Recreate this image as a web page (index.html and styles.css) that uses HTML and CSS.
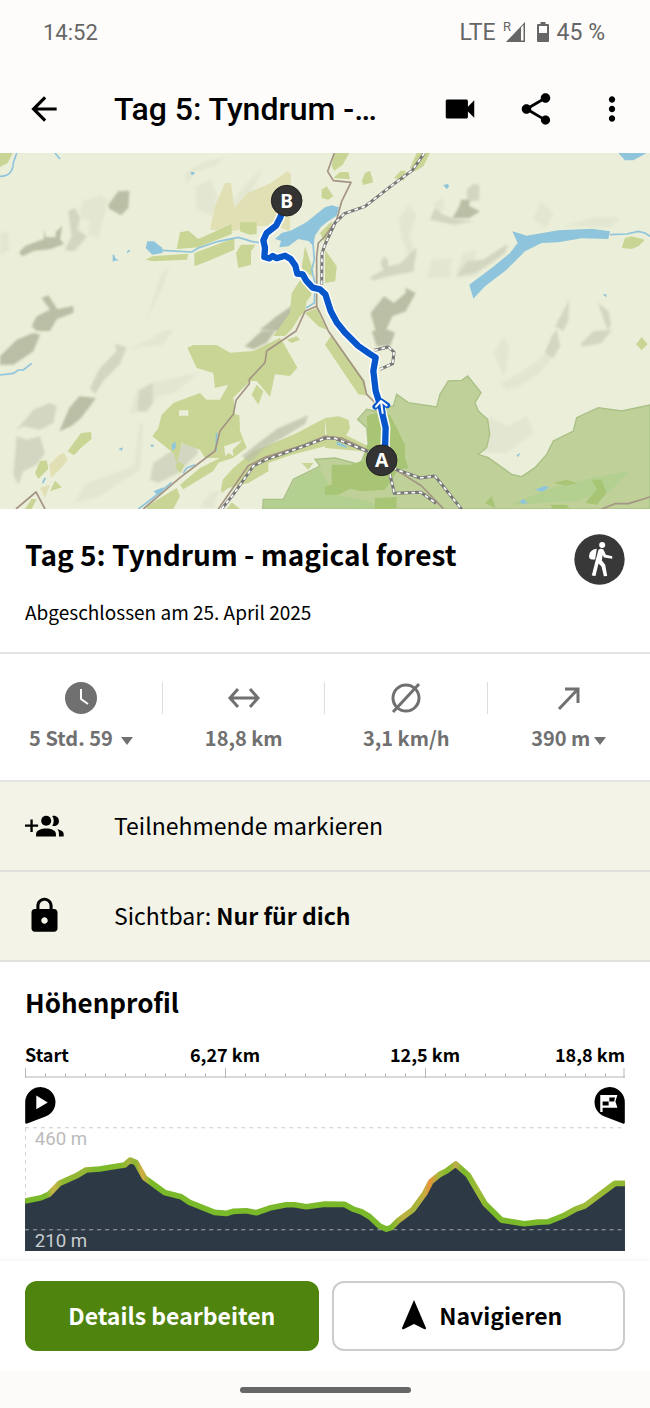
FILE: index.html
```html
<!DOCTYPE html>
<html lang="de">
    <head>
        <meta charset="UTF-8" />
        <meta name="viewport" content="width=device-width, initial-scale=1" />
        <title>Tag 5: Tyndrum - magical forest</title>
        <link rel="stylesheet" href="styles.css">
    </head>
    <body>
        <div class="status-bar">
            <span>14:52</span>
            <div class="status-right">
                <span>LTE</span>
                <svg class="signal" viewBox="0 0 22 22">
                    <path d="M21 1v20H2z" />
                    <path class="signal-gap" d="M17 6.500l2.500-2.500v15.500H17z" />
                    <text x="-1" y="10">R</text>
                </svg>
                <svg class="battery" viewBox="0 0 12 20">
                    <path fill-rule="evenodd" d="M3.500 0h5v2H11a1 1 0 0 1 1 1v16a1 1 0 0 1-1 1H1a1 1 0 0 1-1-1V3a1 1 0 0 1 1-1h2.500zM2 4v7h8V4z" />
                </svg>
                <span>45 %</span>
            </div>
        </div>

        <header class="app-bar">
            <button class="icon-btn" aria-label="Zurück">
                <svg viewBox="0 0 24 24"><path d="M20 11H7.830l5.590-5.590L12 4l-8 8 8 8 1.410-1.410L7.830 13H20v-2z" /></svg>
            </button>
            <div class="app-title">Tag 5: Tyndrum -…</div>
            <button class="icon-btn" aria-label="Video">
                <svg viewBox="0 0 24 24"><path d="M17 10.500V7c0-.55-.45-1-1-1H4c-.55 0-1 .45-1 1v10c0 .55.45 1 1 1h12c.55 0 1-.45 1-1v-3.500l4 4v-11l-4 4z" /></svg>
            </button>
            <button class="icon-btn" aria-label="Teilen">
                <svg viewBox="0 0 24 24"><path d="M18 16.080c-.76 0-1.440.3-1.960.77L8.910 12.700c.05-.23.09-.46.09-.7s-.04-.47-.09-.7l7.050-4.110c.54.5 1.250.81 2.040.81 1.660 0 3-1.340 3-3s-1.340-3-3-3-3 1.340-3 3c0 .24.04.47.09.7L8.040 9.810C7.500 9.310 6.790 9 6 9c-1.660 0-3 1.340-3 3s1.340 3 3 3c.79 0 1.500-.31 2.040-.81l7.120 4.160c-.05.21-.08.43-.08.65 0 1.610 1.310 2.920 2.920 2.920s2.920-1.310 2.920-2.920-1.310-2.920-2.920-2.920z" /></svg>
            </button>
            <button class="icon-btn" aria-label="Mehr">
                <svg viewBox="0 0 24 24"><path d="M12 8c1.100 0 2-.9 2-2s-.9-2-2-2-2 .9-2 2 .9 2 2 2zm0 2c-1.100 0-2 .9-2 2s.9 2 2 2 2-.9 2-2-.9-2-2-2zm0 6c-1.100 0-2 .9-2 2s.9 2 2 2 2-.9 2-2-.9-2-2-2z" /></svg>
            </button>
        </header>

        <svg class="map" viewBox="0 0 1950 1068" role="img" aria-label="Karte">
            <!-- hill shading -->
            <g class="shade-light">
                <path d="M245 145l60-20 20 15-10 40-20 75-30-10 5-40-30-10z" />
                <path d="M205 170l30 5 5 60 20 20-30 40-30-5 20-50z" />
                <path d="M0 240l25-5 5 55-30 15z" />
                <path d="M555 60l50-30 70-20-30 30-60 15-25 40z" />
                <path d="M585 100l50-20 20 60-15 50-50-20z" />
                <path d="M700 140l50-60 40-35-40 80-50 45z" />
                <path d="M1195 200l30-45 25 30-20 65 20 65-20 10-25-70z" />
                <path d="M1300 150l30-15 5 30-20 15z" />
                <path d="M1280 375l15-55 60-5-5 60z" />
                <path d="M1370 350l20-50 40-10-10 50 50-20-40 50-60 5z" />
                <path d="M1600 200l20-55 40 35-20 45z" />
                <path d="M1690 220l100-30 70 5-30 30z" />
                <path d="M440 500l40-130 30-30-30 80z" />
                <path d="M385 590l60-30 50-30 25 0-30 45-90 10z" />
                <path d="M390 780l20-70 45-20 90-20 50-10-70 60-50 10-30 45z" />
                <path d="M600 1060l30-40 30-10-20 58z" />
                <path d="M1480 600l30-50 20 30-10 60-10 30z" />
                <path d="M1500 690l60-30 70-50 20-40 10 40-40 50-60 40-40 10z" />
                <path d="M1440 900l30-110 50 30 60-30 20 50-80 60z" />
                <path d="M260 990l140-50 20-130 10 0-10 140-120 80-80 20z" />
            </g>
            <g class="shade-mid">
                <path d="M205 175l20-10 15 30-10 35 30 20-40 45-25-5 20-40z" />
                <path d="M1400 110l20-18 18 5 0 45-35 5z" />
                <path d="M1290 200l15-35 25 20 30 10 60 10-60 10z" />
                <path d="M1108 375l42-25-8-20 10-20 12 10 0 20 36-8 50-50-10 75-60 10-60 15z" />
                <path d="M1370 370l30-45 50-5 60-40 15-5-10 25-40 30-50 30z" />
                <path d="M1665 520l30-55 12-25-2 60-15 34z" />
                <path d="M1795 450l30 25 8 40-10 15-15-40z" />
                <path d="M270 705l30-60 50-50-5-22 35 10-20 50-50 50-25 40z" />
                <path d="M50 830l50-60 50-20 20 10-10 50-40 20-50-10z" />
                <path d="M50 850l30 10 40-10 15 50-25 35-40 20-15 40-15-30z" />
                <path d="M412 775l5-60 40-25 0 60-20 25z" />
                <path d="M450 980l10-50 60-40 60-40 15 50-60 60-60 30z" />
                <path d="M1635 600l20-50 15-20 10 50-20 35z" />
                <path d="M1740 575l40-40 55-5-30 40-50 10z" />
            </g>
            <g class="shade-dark">
                <path d="M57 298l20-20 55-20 0-30 5 25 30 0 0-15 20-20-7 40 12 15-40 15-50 5-35 17z" />
                <path d="M95 520l15-30 40-20-25-35 20-8 27 42 48-10 0 20-50 20-20 35-40 0z" />
                <path d="M325 155l30-40 33-2-3 52-22 22-35-20z" />
                <path d="M1358 195l20-35 5-20h25v20l32 15-32 20z" />
                <path d="M1112 480l40-50 30 20 35-30 0-15 30 15-30 55-40 15-20 44h-30z" />
                <path d="M780 530l50-40 50-35 20 0-60 80z" />
                <path d="M0 610l50-50 50-20 20 5-20 50-60 40-40 0z" />
                <path d="M178 835l30-70 30-35 50 5-15 20-30 40-30 25z" />
                <path d="M735 580l50-46h40l-25 35-40 20z" />
                <path d="M1115 534l50-4 20 10-15 40-40 0z" />
            </g>

            <!-- fields and meadows -->
            <path class="heath" d="M630 230l15-70 30-70h18l10 75 40-45 70-30 50-36 10 10-3 170-40-15-60 0-70 15z" />
            <path class="heath" d="M148 935l30-30 15-5 10 20-20 25-30 30zM120 1005l30-10-15 40z" />
            <g class="meadow">
                <path d="M0 0h38l-15 30-23 12z" />
                <path d="M530 288l10-50 25-5 30 25 100-45 0 30-100 40z" />
                <path d="M720 208h50l0 35-20 2-30-10zM583 300l120-45v35l-80 35-40 15z" />
                <path d="M437 320l20-10 108-8-4 18-100 5zM708 300l15-25h43l-13 20v40l-38 10z" />
                <path d="M1003 0h45l-20 35-25 18-8-13zM1000 75l20-18h25l5 22zM1085 85l10-25 15-7 10 35-30 8zM1182 75l20-22 15 0-5 30zM1230 45l20-45h40l-20 40-25 15z" />
                <path d="M965 110l15-10 20 30-15 10-20-5zM960 240l35-35 0 25-20 40z" />
                <path d="M905 345l10-65 25 75-5 15z" />
                <path d="M875 420l30-45 25 30 5 20-15 20-5 30-15 14-25 40-20 20h-35l50-70z" />
                <path d="M915 480l35-15 30 65-25-10z" />
                <path d="M975 290l35 50-4 45-31 5z" />
                <path d="M1865 285l10-30 20-5 40 10-20 20-20 8z" />
                <path d="M562 584l18-8 70 0 40 23 70-5 80-40 10 15 42 75-22 25-45-5-15 67-40-47-20 0-50 50 5 50 13 2 2 48 20 50-40 30-45 15-15 25-90 55-10-14 60-50 60-30-45 0-15-25-55-20-15 60-10-30-63-50 18-25 10-40 35-35 80-30 20 20 40 0 25-45-40 10-5-45-50-15z" />
                <path d="M755 725l15-30 20 20-15 40zM860 560l30-10 10 10-25 10zM203 895l40-55 30-3 2 20-35 30-18 20zM105 960l15-35 20-3 5 25-30 30zM150 1015l15-32 20 20z" />
                <path d="M75 1068l20-30 15 0-15 30zM525 945l8-20 20 10-10 25z" />
                <path d="M440 1060l90-55 10 25-20 38h-80zM680 1068l15-20 25 20z" />
                <path d="M663 1010l5-30 32-35 60-50 120-50 95-49v84l-100 25-70 25 0 25-60 35-60 15-20 15z" />
                <path d="M905 930l35 0-15 20zM975 795l40-5 30 10 5 25-10 20-60 0zM975 845l60 0 70 35-15 15-115-10z" />
                <path d="M975 575l20-30 100 140 5 42-25-3z" />
                <path d="M1908 574l17-22 18 22-18 18z" />
            </g>
            <path class="clearing" d="M537 772h28v16h-28zM672 880l30-10 26-8-30 28 2 20-14-10-10 10z" />
            <path class="shade-dark ridge" d="M725 910l50-40 60-45 90-38-10 25-55 35-70 40-40 40z" />

            <!-- national park -->
            <path class="forest-light" d="M788 1068L790 1039 850 1039 880 979 960 939 945 919 1005 915 1070 932 1085 924 1105 874 1100 824 1073 799 1100 769 1125 774 1165 762 1180 759 1190 724 1225 749 1310 762 1320 724 1345 684 1385 682 1403 669 1443 719 1425 749 1435 774 1463 799 1469 844 1460 884 1435 904 1465 914 1535 964 1565 971 1605 944 1640 904 1660 864 1720 834 1730 794 1795 764 1865 774 1950 756V1068z" />
            <path class="glen" d="M794 1066v-24l60-2 30-58 76-38 40 80 100 20 50 24zM1540 1050l130-50 150-35 70-10-60 60-110 30-180 10z" />
            <g class="forest">
                <path d="M1100 790l40-15 30 10 20 40 25 50 0 40 10 30-30 5-40 60-70 5-90-20 0-60 55 0 40-10 15-60z" />
                <path d="M975 1000l50-10 30 15-40 20h-40zM1125 1035l65-3 0 36h-65zM1455 1050l20-20 12 36zM1660 990l40-10 30 10-30 8zM1755 1050l35-40-15-30 30 0 15 40-30 35zM1650 1055l50 0 10 13h-50z" />
            </g>

            <!-- water -->
            <g class="water">
                <path d="M825 258l20-18 30-8 45-25 55-44 20-6 22 6-7 25-30 20-18 15-17 25-5 30-15-14-30-6-30 22-27 3 5-20z" />
                <path d="M437 285l5-20 20 0 25 20 0 15-30 5z" />
                <path d="M338 305l4 0 4 10 12 9-10-2-10 4zM380 297l8-8 2 6-8 6z" />
                <path d="M1537 235l18 5 25 8 95-16 100-5 55 8-5 23-80-2-70 12-50 2-50 25-55 55-65 50-35 37-12-42 67-50 55-45 23-30z" />
                <path d="M1855 0h85l-40 22-25 0z" />
                <path d="M572 57h12l-3 8h-7zM1330 96l14-3 3 8-7 7zM1808 425l10-2 3 10zM355 888l15-5-5 10zM451 875h10v6h-8zM515 875l12-10 0 20-10 8zM460 1015l30-12-5 15-10 8z" />
                <path d="M1550 906l12-7-8 14zM1605 1010l30-12 12 6-20 12zM1560 1045l10-8 14 14-20 1zM1010 865l30 15 0 5-30-10z" />
            </g>
            <g class="stream">
                <path d="M0 70q38 0 40-40l10-30M165 0l15 18" />
                <path d="M485 292l90 5 20-12 60-20 60-12 40 12 30 5M938 260l5 60-8 30 10 40-2 60-25 15" />
                <path d="M1830 245l50-2 35-8 20 5 15 10" />
                <path d="M0 666l40-5 15-10 15 0 25-20M415 1068l40-30 60-50M550 960l10-15 25-10M650 840l-2 55M128 990l8-15" />
            </g>

            <!-- roads -->
            <g class="road">
                <path d="M1003 0l-20 55 17 28 53 5-28 57-15 55-35 50-20 20-5 40 0 150-35 15-27 59-88 60-5 35-47 50v13l-40 50-8 42-40 50-15 60-105 80-110 94" />
                <path d="M950 460l15 30 20 44 105 150 10 40 35 35" />
                <path d="M655 1068l90-130 50-25 110-35 70-28 50 5 75 35 90 62 75 47 65 68" />
                <path d="M48 1068l60-51 27 51M1805 1068l40-16h40l65-20" />
            </g>
            <g class="rail">
                <path class="rail-base" d="M1273 0l-36 52-62 46-80 62-62 22-28 28-30 65-9 25-1 95M1123 592l42-10 17 15-4 35-38 17M665 1068l35-44 60-85 40-20 100-35 75-28h30l95 38 90 56 70 25 45-6 80 100M1170 964l13 57 80-3 45 33" />
                <path class="rail-dash" d="M1273 0l-36 52-62 46-80 62-62 22-28 28-30 65-9 25-1 95M1123 592l42-10 17 15-4 35-38 17M665 1068l35-44 60-85 40-20 100-35 75-28h30l95 38 90 56 70 25 45-6 80 100M1170 964l13 57 80-3 45 33" />
            </g>

            <!-- recorded track -->
            <g class="track">
                <path class="track-casing" d="M860 143L840 195 828 218 800 240 790 262 795 285 793 312 808 316 818 309 830 316 855 308 872 318 886 338 892 362 908 364 918 382 938 404 960 409 976 424 992 474 1010 508 1034 538 1075 579 1108 602 1127 614 1120 654 1127 714 1143 764 1157 824 1155 890" />
                <path class="track-line" d="M860 143L840 195 828 218 800 240 790 262 795 285 793 312 808 316 818 309 830 316 855 308 872 318 886 338 892 362 908 364 918 382 938 404 960 409 976 424 992 474 1010 508 1034 538 1075 579 1108 602 1127 614 1120 654 1127 714 1143 764 1157 824 1155 890" />
                <path class="track-arrow-edge" d="M1126 761l17-17 19 13M1148 776l-5-30" />
                <path class="track-arrow" d="M1148 780l-5-34M1128 761l15-17 17 13" />
            </g>
            <g class="pin">
                <circle cx="860" cy="143" r="46" />
                <text x="860" y="164">B</text>
                <circle cx="1145" cy="922" r="46" />
                <text x="1145" y="943">A</text>
            </g>
        </svg>

        <main>
            <section class="tour-head">
                <div>
                    <h1>Tag 5: Tyndrum - magical forest</h1>
                    <p>Abgeschlossen am 25. April 2025</p>
                </div>
                <svg class="sport-icon" viewBox="12 13 152 152" role="img" aria-label="Wandern">
                    <circle cx="88" cy="89" r="75" />
                    <g class="hiker">
                        <circle cx="96" cy="46" r="9" />
                        <path d="M80 57C66 58 57 68 57 80q0 9 9 9h9z" />
                        <path d="M85 60q8-6 15 0l7 15 19 4v8l-24-4-5-7-2 16 10 13 6 33-10 1-7-29-9-9-9 37-11-1 12-47z" />
                    </g>
                </svg>
            </section>

            <section class="stats">
                <button class="stat">
                    <svg viewBox="0 0 36 36">
                        <circle cx="18" cy="18" r="16" />
                        <path class="clock-hands" d="M18 9v10l7 5" />
                    </svg>
                    <span>5 Std. 59 <i class="caret"></i></span>
                </button>
                <div class="stat">
                    <svg class="lined" viewBox="0 0 36 36"><path d="M5 18h26M12 9l-8 9 8 9M24 9l8 9-8 9" /></svg>
                    <span>18,8 km</span>
                </div>
                <div class="stat">
                    <svg class="lined" viewBox="0 0 36 36"><circle cx="18" cy="18" r="13" /><path d="M5 32L31 4" /></svg>
                    <span>3,1 km/h</span>
                </div>
                <button class="stat">
                    <svg class="lined" viewBox="0 0 36 36"><path d="M8 29L27 9M14 9h13v14" /></svg>
                    <span>390 m<i class="caret"></i></span>
                </button>
            </section>

            <button class="row">
                <svg viewBox="75 76 116 116">
                    <path d="M75 131h16v-15h7v15h16v7H98v15h-7v-15H75z" />
                    <circle cx="138" cy="120" r="15" />
                    <path d="M108 167v-8c0-10 15-16 30-16s29 6 29 16v8z" />
                    <path d="M156 106c11-3 20 5 20 15s-9 17-20 14c6-8 6-21 0-29zM171 145c11 2 19 7 19 14v8h-14v-8c0-6-1-10-5-14z" />
                </svg>
                <span>Teilnehmende markieren</span>
            </button>
            <button class="row">
                <svg viewBox="0 0 24 24"><path d="M18 8h-1V6c0-2.760-2.240-5-5-5S7 3.240 7 6v2H6c-1.100 0-2 .9-2 2v10c0 1.100.9 2 2 2h12c1.100 0 2-.9 2-2V10c0-1.100-.9-2-2-2zm-6 9c-1.100 0-2-.9-2-2s.9-2 2-2 2 .9 2 2-.9 2-2 2zm3.100-9H8.900V6c0-1.710 1.390-3.100 3.100-3.100 1.710 0 3.100 1.390 3.100 3.100v2z" /></svg>
                <span>Sichtbar: <b>Nur für dich</b></span>
            </button>

            <section class="profile">
                <h2>Höhenprofil</h2>
                <div class="distances">
                    <span>Start</span>
                    <span>6,27 km</span>
                    <span>12,5 km</span>
                    <span>18,8 km</span>
                </div>
                <svg class="ruler" viewBox="0 0 600 10">
                    <path d="M0 9h600" />
                    <path class="minor" d="M0 7h600" />
                    <path class="major" d="M0 5h600" />
                    <path d="M599 0v10" />
                </svg>
                <div class="markers">
                    <svg viewBox="0 0 91 110">
                        <path d="M0 46a45 45 0 1 1 62 41L4 109q-4 1-4-4z" />
                        <path class="marker-sign" d="M33 25v41l34-20z" />
                    </svg>
                    <svg viewBox="0 0 91 110">
                        <path d="M91 46a45 45 0 1 0-62 41l58 22q4 1 4-4z" />
                        <path class="marker-sign" fill-rule="evenodd" d="M18 24h51l-6 19 6 19H25v12h-7zM45 31v12h14l3-12zM25 43v12h18V43z" />
                    </svg>
                </div>
                <svg class="chart" viewBox="0 0 1798 378">
                    <defs>
                        <linearGradient id="slope" gradientUnits="userSpaceOnUse" x1="0" y1="0" x2="1798" y2="0">
                            <stop offset="0" stop-color="#7ab929" />
                            <stop offset=".035" stop-color="#7ab929" />
                            <stop offset=".047" stop-color="#c9b44a" />
                            <stop offset=".065" stop-color="#8cb92f" />
                            <stop offset=".1" stop-color="#97b536" />
                            <stop offset=".12" stop-color="#7ab929" />
                            <stop offset=".16" stop-color="#84b92b" />
                            <stop offset=".174" stop-color="#a5b33c" />
                            <stop offset=".185" stop-color="#8cb42f" />
                            <stop offset=".195" stop-color="#d6ac48" />
                            <stop offset=".21" stop-color="#7ab929" />
                            <stop offset=".61" stop-color="#7ab929" />
                            <stop offset=".63" stop-color="#c0af42" />
                            <stop offset=".65" stop-color="#a3b53a" />
                            <stop offset=".665" stop-color="#c4ae42" />
                            <stop offset=".675" stop-color="#e5933a" />
                            <stop offset=".69" stop-color="#a0b939" />
                            <stop offset=".705" stop-color="#84b92b" />
                            <stop offset=".718" stop-color="#c1ae4a" />
                            <stop offset=".73" stop-color="#7ab929" />
                            <stop offset=".755" stop-color="#9fbb38" />
                            <stop offset=".775" stop-color="#7ab929" />
                            <stop offset=".88" stop-color="#7ab929" />
                            <stop offset=".94" stop-color="#a3bb3c" />
                            <stop offset="1" stop-color="#8cb92f" />
                        </linearGradient>
                    </defs>
                    <path class="area" d="M0 378V228L48 218 71 208 103 175 158 150 183 135 223 132 298 120 315 105 333 113 358 158 418 202 468 215 493 232 568 262 603 265 623 259 663 257 693 263 733 249 783 239 808 239 843 245 898 237 958 238 983 252 1008 260 1033 275 1063 303 1083 312 1098 307 1118 287 1163 253 1198 205 1216 170 1243 148 1263 138 1291 117 1328 150 1378 235 1428 285 1496 296 1538 291 1568 290 1618 270 1648 253 1678 242 1768 175 1798 175V378z" />
                    <path class="grid-top" d="M0 8H1798M1 8V228" />
                    <path class="grid-bottom" d="M0 314H1798" />
                    <path class="line" d="M0 228L48 218 71 208 103 175 158 150 183 135 223 132 298 120 315 105 333 113 358 158 418 202 468 215 493 232 568 262 603 265 623 259 663 257 693 263 733 249 783 239 808 239 843 245 898 237 958 238 983 252 1008 260 1033 275 1063 303 1083 312 1098 307 1118 287 1163 253 1198 205 1216 170 1243 148 1263 138 1291 117 1328 150 1378 235 1428 285 1496 296 1538 291 1568 290 1618 270 1648 253 1678 242 1768 175 1798 175" />
                    <text class="label-top" x="29" y="60">460 m</text>
                    <text class="label-bottom" x="29" y="366">210 m</text>
                </svg>
            </section>
        </main>

        <footer class="actions">
            <button class="btn btn-primary">Details bearbeiten</button>
            <button class="btn">
                <svg viewBox="0 0 24 30"><path d="M12 0l12 28q0 2-2 1l-10-5-10 5q-2 1-2-1z" /></svg>
                Navigieren
            </button>
        </footer>
        <div class="nav-bar"><div class="nav-handle"></div></div>
    </body>
</html>
```

FILE: styles.css
```css
* {
    box-sizing: border-box;
}

body {
    margin: 0;
    font-family: "Noto Sans CJK JP", "Noto Sans", sans-serif;
    color: #000;
    background-color: #fff;
}

button {
    font: inherit;
    color: inherit;
    background: none;
    border: none;
    padding: 0;
    cursor: pointer;
}

svg {
    display: block;
}

/* Top of the screen */
.status-bar {
    display: flex;
    justify-content: space-between;
    align-items: center;
    height: 64px;
    padding: 0 45px 0 43px;
    font-family: Roboto, sans-serif;
    font-size: 22px;
    color: #666;
    background-color: #fdfcfb;
}

.status-right {
    display: flex;
    align-items: center;
    gap: 8px;
    font-size: 23px;
}

.status-bar svg {
    fill: #666;
}

.signal {
    width: 22px;
    height: 22px;
    overflow: visible;
}

.signal .signal-gap {
    fill: #fdfcfb;
}

.signal text {
    font-size: 13px;
}

.battery {
    width: 12px;
    height: 20px;
    margin-left: 3px;
}

.app-bar {
    display: flex;
    align-items: center;
    gap: 38px;
    height: 89px;
    padding: 0 19px 0 25px;
    background-color: #fdfcfb;
}

.icon-btn svg {
    width: 38px;
    height: 38px;
}

.app-title {
    flex: 1;
    min-width: 0;
    padding-left: 13px;
    font-family: Roboto, sans-serif;
    font-size: 32px;
    font-weight: 500;
    white-space: nowrap;
}

/* Map */
.map {
    width: 100%;
    background-color: #ebeed8;
}

.shade-light,
.shade-mid,
.shade-dark {
    filter: blur(3px);
}

.shade-light {
    fill: #dfe2cd;
    opacity: .6;
}

.shade-mid {
    fill: #d3d7c1;
}

.shade-dark {
    fill: #b9beA5;
}

.ridge {
    opacity: .7;
}

.heath {
    fill: #e1e0b5;
}

.meadow {
    fill: #c8d595;
}

.clearing {
    fill: #ebeed8;
}

.forest-light {
    fill: #bfd199;
    stroke: #a9c087;
    stroke-width: 4;
}

.forest {
    fill: #a8c575;
}

.glen {
    fill: #a9cf87;
    opacity: .5;
}

.water {
    fill: #8fc5dc;
}

.stream {
    fill: none;
    stroke: #8fc5dc;
    stroke-width: 5;
}

.road {
    fill: none;
    stroke: #a49484;
    stroke-width: 5;
    stroke-linejoin: round;
}

.rail {
    fill: none;
    stroke-linejoin: round;
}

.rail-base {
    stroke: #777;
    stroke-width: 9;
}

.rail-dash {
    stroke: #fff;
    stroke-width: 5;
    stroke-dasharray: 11 11;
}

.track {
    fill: none;
    stroke-linecap: round;
    stroke-linejoin: round;
}

.track-casing {
    stroke: #fff;
    stroke-width: 28;
}

.track-line {
    stroke: #0656cb;
    stroke-width: 19;
}

.track-arrow-edge {
    stroke: #0656cb;
    stroke-width: 17;
}

.track-arrow {
    stroke: #fff;
    stroke-width: 6;
}

.pin circle {
    fill: #333;
    stroke: #222;
    stroke-width: 3;
}

.pin text {
    font-family: "Noto Sans", sans-serif;
    font-size: 58px;
    font-weight: 700;
    text-anchor: middle;
    fill: #fff;
}

/* Tour head */
.tour-head {
    display: flex;
    justify-content: space-between;
    align-items: flex-start;
    height: 145px;
    padding: 25px 25px 0;
    border-bottom: 2px solid #e3e3e3;
}

h1 {
    margin: 0 0 20px;
    font-size: 28px;
    line-height: 40px;
    font-weight: 700;
}

.tour-head p {
    margin: 0;
    font-size: 19px;
    line-height: 36px;
}

.sport-icon {
    width: 51px;
    height: 51px;
    fill: #383838;
}

.hiker {
    fill: #fff;
}

/* Stats */
.stats {
    display: grid;
    grid-template-columns: repeat(4, 1fr);
    padding: 26px 0 28px;
    border-bottom: 2px solid #e3e3e3;
    font-size: 20px;
    line-height: 28px;
    font-weight: 700;
    color: #707070;
}

.stat {
    display: flex;
    flex-direction: column;
    align-items: center;
    gap: 8px;
    position: relative;
}

.stat + .stat::before {
    content: "";
    position: absolute;
    left: -1px;
    top: 2px;
    width: 1px;
    height: 32px;
    background-color: #ddd;
}

.stat svg {
    width: 36px;
    height: 36px;
    fill: #707070;
}

.stat .lined {
    fill: none;
    stroke: #707070;
    stroke-width: 3;
}

.stat .clock-hands {
    fill: none;
    stroke: #fff;
    stroke-width: 2;
}

.caret {
    display: inline-block;
    margin-left: 4px;
    vertical-align: 1px;
    border-left: 6px solid transparent;
    border-right: 6px solid transparent;
    border-top: 8px solid #707070;
}

/* Rows */
.row {
    display: flex;
    align-items: center;
    gap: 50px;
    width: 100%;
    height: 90px;
    padding: 0 25px 2px;
    border-bottom: 2px solid #e0e1dc;
    background-color: #f3f3e8;
    font-size: 23px;
    text-align: left;
}

.row svg {
    width: 39px;
    height: 39px;
}

/* Elevation profile */
.profile {
    padding: 20px 25px 10px;
}

h2 {
    margin: 0 0 18px;
    font-size: 26px;
    line-height: 40px;
    font-weight: 700;
}

.distances {
    display: grid;
    grid-template-columns: 1fr 2fr 2fr 1fr;
    font-size: 18px;
    line-height: 28px;
    font-weight: 700;
    text-align: center;
    white-space: nowrap;
}

.distances span:first-child {
    text-align: left;
}

.distances span:last-child {
    text-align: right;
}

.ruler {
    width: 100%;
    stroke: #b5b5b5;
    stroke-width: 1;
}

.ruler .minor {
    stroke-width: 3;
    stroke-dasharray: 1 19;
}

.ruler .major {
    stroke-width: 10;
    stroke-dasharray: 1 199;
}

.markers {
    display: flex;
    justify-content: space-between;
    padding: 9px 0 1px;
}

.markers svg {
    width: 31px;
    height: 37px;
}

.marker-sign {
    fill: #fff;
}

.chart {
    width: 100%;
}

.area {
    fill: #2d3945;
}

.grid-top,
.grid-bottom {
    fill: none;
    stroke: #ccc;
    stroke-width: 3;
    stroke-dasharray: 12 12;
}

.grid-bottom {
    stroke: #a3a9ae;
}

.line {
    fill: none;
    stroke: url(#slope);
    stroke-width: 17;
    stroke-linejoin: round;
}

.chart text {
    font-family: Roboto, sans-serif;
    font-size: 56px;
}

.label-top {
    fill: #bbb;
}

.label-bottom {
    fill: #c9cdd0;
}

/* Bottom actions */
.actions {
    display: grid;
    grid-template-columns: 1fr 1fr;
    gap: 13px;
    padding: 20px 25px;
    box-shadow: 0 -2px 4px rgba(0, 0, 0, .04);
}

.btn {
    display: flex;
    align-items: center;
    justify-content: center;
    gap: 13px;
    height: 70px;
    padding-bottom: 2px;
    border: 2px solid #ccc;
    border-radius: 12px;
    font-size: 23px;
    font-weight: 700;
}

.btn-primary {
    color: #fff;
    background-color: #4f840e;
    border-color: #4f840e;
}

.btn svg {
    width: 24px;
    height: 30px;
    margin-left: 8px;
}

.nav-bar {
    display: flex;
    justify-content: center;
    padding: 16px 0;
    background-color: #fdfbfa;
}

.nav-handle {
    width: 171px;
    height: 6px;
    border-radius: 3px;
    background-color: #666;
}
```
